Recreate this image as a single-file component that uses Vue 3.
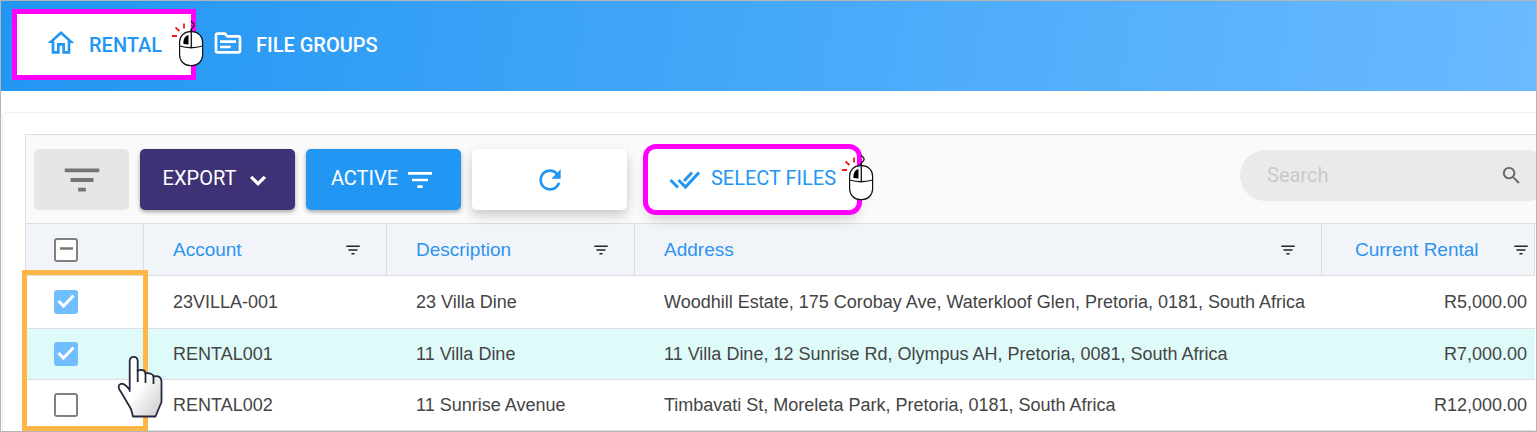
<script setup>
import { ref } from 'vue'

const search = ref('')
const filterPath = 'M10 18h4v-2h-4v2zM3 6v2h18V6H3zm3 7h12v-2H6v2z'
const columns = [
  { key: 'account', label: 'Account' },
  { key: 'description', label: 'Description' },
  { key: 'address', label: 'Address' },
  { key: 'rental', label: 'Current Rental', numeric: true },
]
const rows = ref([
  { checked: true, account: '23VILLA-001', description: '23 Villa Dine', address: 'Woodhill Estate, 175 Corobay Ave, Waterkloof Glen, Pretoria, 0181, South Africa', rental: 'R5,000.00' },
  { checked: true, active: true, account: 'RENTAL001', description: '11 Villa Dine', address: '11 Villa Dine, 12 Sunrise Rd, Olympus AH, Pretoria, 0081, South Africa', rental: 'R7,000.00' },
  { checked: false, account: 'RENTAL002', description: '11 Sunrise Avenue', address: 'Timbavati St, Moreleta Park, Pretoria, 0181, South Africa', rental: 'R12,000.00' },
])
</script>

<template>
  <div class="frame">
    <svg class="defs" width="0" height="0" aria-hidden="true">
      <symbol id="mouse-click" viewBox="0 0 34 48">
        <path d="M21 12V11C21 9 25 8 24 5.500C23 3.500 22 3.500 21 2" fill="none" stroke="#111" stroke-width="1.300" />
        <rect x="9.600" y="12.600" width="23" height="34" rx="10.500" fill="#fff" stroke="#111" stroke-width="1.200" />
        <path d="M9.600 27Q21 30.500 32.600 27M21.300 10V28.500" fill="none" stroke="#111" stroke-width="1.300" />
        <path d="M18.500 16V25.500L13.500 25C13 21 14.500 17 18.500 16Z" fill="#000" />
        <path d="M2 17H7M5.500 8.500L9.500 12M14 4.500V9.500" fill="none" stroke="#f01818" stroke-width="1.800" />
      </symbol>
    </svg>

    <nav class="topbar">
      <a href="#rental" class="tab tab-current">
        <svg class="icon-nav" viewBox="0 0 24 24"><path d="M12 5.690l5 4.500V18h-2v-6H9v6H7v-7.810l5-4.500M12 3L2 12h3v8h6v-6h2v6h6v-8h3L12 3z" /></svg>
        <span>RENTAL</span>
        <svg class="click-mark"><use href="#mouse-click" /></svg>
      </a>
      <a href="#file-groups" class="tab">
        <svg class="icon-nav" viewBox="0 0 24 24"><path d="M20 6h-8l-2-2H4c-1.100 0-1.990.9-1.990 2L2 18c0 1.100.9 2 2 2h16c1.100 0 2-.9 2-2V8c0-1.100-.9-2-2-2zm0 12H4V6h5.170l2 2H20v10zm-2-6H6v-2h12v2zm-4 4H6v-2h8v2z" /></svg>
        <span>FILE GROUPS</span>
      </a>
    </nav>

    <main class="card">
      <div class="toolbar">
        <button class="btn btn-filter" aria-label="Filter"><svg class="icon-big" viewBox="0 0 24 24"><path :d="filterPath" /></svg></button>
        <button class="btn btn-export"><span>EXPORT</span>
          <svg class="icon-chevron" viewBox="0 0 24 24"><path d="M4.500 8.500L12 16l7.500-7.500" fill="none" stroke="#fff" stroke-width="3.500" /></svg>
        </button>
        <button class="btn btn-active"><span>ACTIVE</span>
          <svg class="icon-active" viewBox="0 0 24 24"><path :d="filterPath" /></svg>
        </button>
        <button class="btn btn-refresh" aria-label="Refresh">
          <svg class="icon-refresh" viewBox="0 0 24 24"><path d="M17.650 6.350C16.200 4.900 14.210 4 12 4c-4.420 0-7.990 3.580-7.990 8s3.570 8 7.990 8c3.730 0 6.840-2.550 7.730-6h-2.080c-.82 2.330-3.040 4-5.650 4-3.310 0-6-2.690-6-6s2.690-6 6-6c1.660 0 3.140.69 4.220 1.780L13 11h7V4l-2.350 2.350z" /></svg>
        </button>
        <button class="btn btn-select">
          <svg class="icon-check" viewBox="0 0 32 20"><path d="M1.500 10L9 17.500M9.500 10L16.500 17L30 2.500M15 11L23 2.500" fill="none" stroke="currentColor" stroke-width="3" /></svg>
          <span>SELECT FILES</span>
          <svg class="click-mark"><use href="#mouse-click" /></svg>
        </button>
        <label class="search">
          <input v-model="search" type="text" placeholder="Search" aria-label="Search" />
          <svg class="icon-search" viewBox="0 0 24 24"><path d="M15.500 14h-.79l-.28-.27C15.410 12.590 16 11.110 16 9.500 16 5.910 13.090 3 9.500 3S3 5.910 3 9.500 5.910 16 9.500 16c1.610 0 3.090-.59 4.230-1.570l.27.28v.79l5 4.990L20.490 19l-4.990-5zm-6 0C7.010 14 5 11.990 5 9.500S7.010 5 9.500 5 14 7.010 14 9.500 11.990 14 9.500 14z" /></svg>
        </label>
      </div>

      <table>
        <colgroup>
          <col class="col-check" /><col class="col-account" /><col class="col-description" /><col /><col class="col-rental" />
        </colgroup>
        <thead>
          <tr>
            <th>
              <label class="tick"><input type="checkbox" aria-label="Select all" :indeterminate="true" />
                <svg viewBox="0 0 24 24"><path d="M6 10.500H19" stroke="#757575" stroke-width="2.500" /></svg></label>
            </th>
            <th v-for="c in columns" :key="c.key" :class="{ numeric: c.numeric }">
              <div class="head"><span>{{ c.label }}</span><svg class="icon-col" viewBox="0 0 24 24"><path :d="filterPath" /></svg></div>
            </th>
          </tr>
        </thead>
        <tbody>
          <tr v-for="r in rows" :key="r.account" :class="{ highlighted: r.active }">
            <td>
              <label class="tick"><input v-model="r.checked" type="checkbox" :aria-label="'Select ' + r.account" />
                <svg v-if="r.checked" viewBox="0 0 24 24"><path d="M4.500 11L9.500 16L19.500 5.500" fill="none" stroke="#fff" stroke-width="3" /></svg></label>
            </td>
            <td v-for="c in columns" :key="c.key" :class="{ numeric: c.numeric }">{{ r[c.key] }}</td>
          </tr>
        </tbody>
      </table>

      <div class="tick-highlight">
        <svg class="hand" viewBox="0 0 46 64">
          <defs><linearGradient id="hand-fill" x1="0" y1="0" x2="1" y2="1"><stop offset=".5" stop-color="#fff" /><stop offset="1" stop-color="#c8c8c8" /></linearGradient></defs>
          <path d="M12.700 36V6Q13 1.800 16.700 1.800Q20.400 1.800 20.700 6V16Q22 14.500 25 15Q28.500 15.500 28.500 18.500Q30 17.800 33 18.500Q36.500 19.500 36.500 21.500Q44 20 44.500 26V47L38.500 61.500H16L14 54L4 37Q-.5 31 3.500 29Q7.500 27.500 12.700 35Z" fill="url(#hand-fill)" stroke="#252a40" stroke-width="1.800" stroke-linejoin="round" />
          <path d="M20.700 15V27M28.500 18V28M36.500 21V29" fill="none" stroke="#252a40" stroke-width="1.800" />
        </svg>
      </div>
    </main>
  </div>
</template>

<style>
body { margin: 0; background: #fff; }
</style>

<style scoped>
.frame {
  box-sizing: border-box;
  border: 1px solid #b5b5b5;
  overflow: hidden;
  font-family: Roboto, sans-serif;
}
.frame svg { fill: currentColor; flex: none; }
.defs { position: absolute; }
.topbar {
  box-sizing: border-box;
  height: 90px;
  padding: 8px 11px 11px;
  display: flex;
  align-items: stretch;
  background: linear-gradient(100deg, #2196f3, #6abaff);
}
.tab {
  position: relative;
  display: flex;
  align-items: center;
  gap: 12px;
  padding: 0 16px;
  color: #fff;
  font-size: 20px;
  font-weight: 500;
  text-decoration: none;
}
.tab-current {
  box-sizing: border-box;
  width: 184px;
  padding: 0 28px;
  border: 5px solid #f0f;
  background: #fff;
  color: #2196f3;
}
.icon-nav { width: 32px; height: 32px; padding-bottom: 4px; }
.click-mark { position: absolute; width: 34px; height: 48px; top: 5px; right: -13px; }
.card {
  position: relative;
  margin: 21px 0 0 1px;
  padding: 21px 0 0 22px;
  border: 1px solid #eee;
  border-width: 1px 0 0 1px;
  border-radius: 5px 0 0 0;
}
.toolbar {
  display: flex;
  align-items: center;
  gap: 11px;
  padding: 14px 0 13px 8px;
  border: 1px solid #dcdee0;
  border-width: 1px 0 1px 1px;
  background: #fafafa;
}
.btn {
  position: relative;
  box-sizing: border-box;
  display: flex;
  align-items: center;
  justify-content: center;
  gap: 8px;
  flex: none;
  width: 155px;
  height: 61px;
  padding: 0;
  border: 0;
  border-radius: 5px;
  color: #fff;
  font: 400 20px Roboto, sans-serif;
  white-space: nowrap;
}
.btn span { padding-bottom: 3px; }
.btn-filter { width: 95px; background: #e6e6e6; color: #757575; }
.btn-export { gap: 11px; padding-right: 3px; background: #3f3176; box-shadow: 0 2px 4px #0005; }
.btn-active { gap: 6px; background: #2196f3; box-shadow: 0 2px 4px #0005; }
.btn-refresh { background: #fff; color: #2196f3; box-shadow: 0 5px 12px #0003; }
.btn-select {
  width: 209px;
  margin-left: 10px;
  border-radius: 8px;
  background: #fff;
  color: #2196f3;
  box-shadow: 0 0 0 5px #f0f, 0 8px 14px #0003;
}
.btn-select { gap: 10px; }
.btn-select .click-mark { top: 4px; right: -17px; }
.icon-big { width: 46px; height: 46px; }
.icon-chevron { width: 22px; height: 22px; }
.icon-active { width: 32px; height: 32px; }
.icon-refresh { width: 32px; height: 32px; }
.icon-check { width: 32px; height: 20px; }
.search {
  box-sizing: border-box;
  display: flex;
  align-items: center;
  flex: none;
  width: 312px;
  height: 51px;
  margin: -9px -16px 0 auto;
  padding: 0 29px 0 27px;
  border-radius: 26px;
  background: #eaeaea;
  color: #666;
}
.search input {
  flex: 1;
  min-width: 0;
  padding: 0;
  border: 0;
  outline: 0;
  background: none;
  font: 400 20px Roboto, sans-serif;
}
.search input::placeholder { color: #c9c9c9; opacity: 1; }
.icon-search { width: 23px; height: 23px; }
table {
  width: calc(100% - 1px);
  table-layout: fixed;
  border-collapse: separate;
  border-spacing: 0;
  border-left: 1px solid #dcdee0;
  font-family: "Liberation Sans", Arial, sans-serif;
  font-size: 18px;
  color: #444;
}
.col-check { width: 118px; }
.col-account { width: 243px; }
.col-description { width: 248px; }
.col-rental { width: 213px; }
th, td {
  box-sizing: border-box;
  height: 51px;
  padding: 0 0 0 28px;
  border-bottom: 1px solid #dcdee0;
  text-align: left;
  font-weight: 400;
  white-space: nowrap;
}
th { height: 52px; padding-right: 24px; border-right: 1px solid #dcdee0; background: #f1f5fa; color: #2e93ee; font-size: 19px; }
th.numeric { padding: 0 4px 0 33px; }
td:not(:first-child) { padding-left: 29px; }
th:not(:first-child, .numeric) { padding-left: 29px; }
td.numeric { padding-right: 8px; text-align: right; }
tbody tr:first-child td { height: 53px; }
.highlighted td { background: #dffbf9; }
.head { display: flex; align-items: center; justify-content: space-between; }
.icon-col { width: 18px; height: 18px; color: #222; }
.tick { display: grid; width: 24px; height: 24px; }
.tick input, .tick svg { grid-area: 1 / 1; width: 24px; height: 24px; }
.tick input {
  appearance: none;
  box-sizing: border-box;
  margin: 0;
  border: 2px solid #808080;
  border-radius: 3px;
  background: #fff;
}
.tick input:checked { border-color: #70bdff; background: #70bdff; }
.tick svg { pointer-events: none; z-index: 1; }
.tick-highlight {
  position: absolute;
  box-sizing: border-box;
  left: 19px;
  bottom: 0;
  width: 126px;
  height: 161px;
  border: 5px solid #ffb648;
  pointer-events: none;
}
.hand { position: absolute; right: -20px; bottom: 7px; width: 46px; height: 64px; }
</style>
